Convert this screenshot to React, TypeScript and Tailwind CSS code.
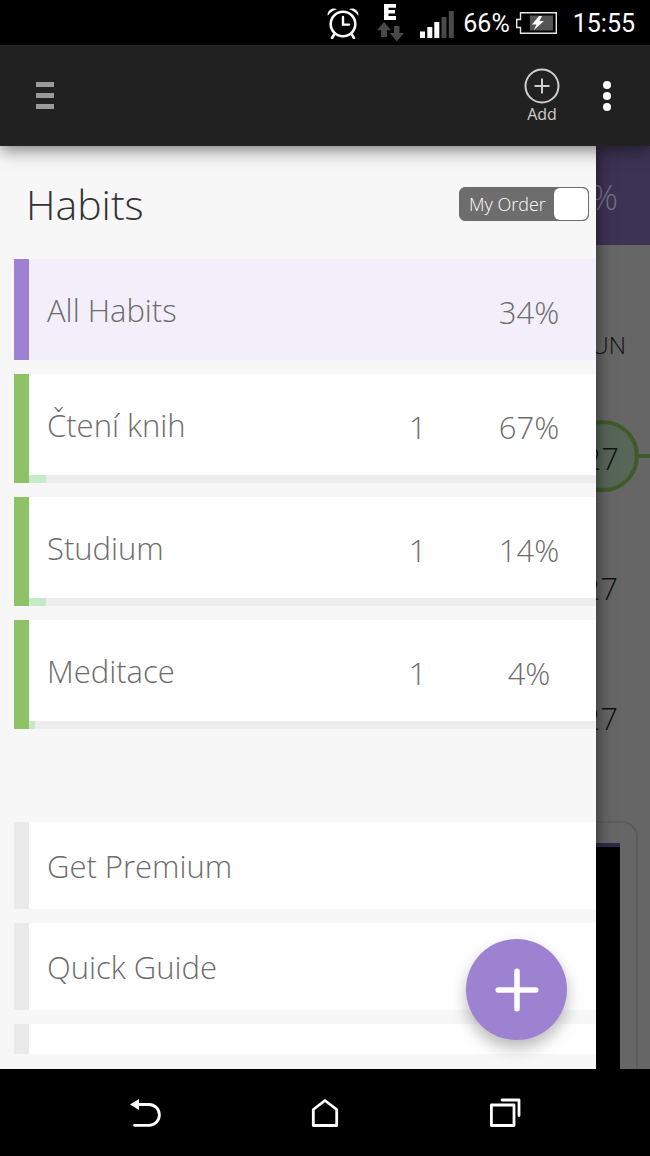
import React, { useState } from 'react';

// --- ICONS ---

const AlarmIcon = () => (
  <svg className="w-8 h-8" viewBox="0 0 32 32" fill="none" stroke="#fff" strokeLinecap="round">
    <circle cx="16" cy="17" r="12.3" strokeWidth="2.6" />
    <path d="M16 10v7.6h6" strokeWidth="2.4" />
    <path d="m7.500 27-2.500 4M24.500 27l2.500 4" strokeWidth="2.6" />
    <path d="M.8 8.800C-.6 4 5.500-.5 10 2.200 6 3.300 3 5.500.8 8.800ZM31.200 8.800C32.600 4 26.500-.5 22 2.200c4 1.100 7 3.300 9.200 6.600Z" fill="#fff" stroke="none" />
  </svg>
);

const DataIcon = () => (
  <svg className="w-[27px] h-[38px]" viewBox="0 0 27 38">
    <path d="M7 0h12v3.800h-7.500V6H18v3.500h-6.500v2.500H19v4H7Z" fill="#fff" />
    <path d="m7 18 7 8.300h-4V33H4v-6.700H0ZM17 22h5.500v7H27l-7.200 8.500-7-8.500H17Z" fill="#4b4b4b" />
  </svg>
);

const SignalIcon = () => (
  <svg className="w-[34px] h-[27px]" viewBox="0 0 34 27">
    <path d="M0 20.500h5V27H0ZM7.300 16h5v11h-5ZM14.300 11h5v16h-5Z" fill="#fff" />
    <path d="M21.500 6h5v21h-5ZM28.800 0h5v27h-5Z" fill="#4b4b4b" />
  </svg>
);

const BatteryIcon = () => (
  <svg className="w-[41px] h-[22px]" viewBox="0 0 41 22">
    <path d="M4.500.7h35.800v20.600H4.500V15.500H.7v-8h3.800Z" fill="none" stroke="#e8e8e8" strokeWidth="1.4" />
    <path d="M14 3.500h23v15H14Z" fill="#555" />
    <path d="m23 4-7 8.500h4.500L18 18l10-9h-4.500L26 4Z" fill="#fff" />
  </svg>
);

const BackIcon = () => (
  <svg className="w-8 h-8" viewBox="0 0 32 32">
    <path d="M8 7.500h12a10.300 10.300 0 0 1 0 20.800H5.500" fill="none" stroke="#fff" strokeWidth="2.8" strokeLinecap="round" />
    <path d="M1 7.500 10 2v11Z" fill="#fff" />
  </svg>
);

const HomeIcon = () => (
  <svg className="w-8 h-8" viewBox="0 0 32 32" fill="none" stroke="#fff" strokeWidth="2.8" strokeLinejoin="round">
    <path d="m16 3.500 11.700 9v16H4.300v-16Z" />
  </svg>
);

const RecentIcon = () => (
  <svg className="w-8 h-8" viewBox="0 0 32 32" fill="none" stroke="#fff" strokeWidth="2.8" strokeLinejoin="round" strokeLinecap="round">
    <path d="M2.400 8H25v20.500H2.400Z" />
    <path d="M13 3h17v15.500" />
  </svg>
);

// --- DATA ---

interface Habit {
  name: string;
  count?: number;
  percent: number;
  progress?: number;
}

const habits: Habit[] = [
  { name: 'All Habits', percent: 34 },
  { name: 'Čtení knih', count: 1, percent: 67, progress: 3 },
  { name: 'Studium', count: 1, percent: 14, progress: 3 },
  { name: 'Meditace', count: 1, percent: 4, progress: 1 },
];

const links = ['Get Premium', 'Quick Guide'];

// --- DRAWER ROWS ---

const HabitRow = ({ habit }: { habit: Habit }) => {
  const isAll = habit.progress === undefined;
  return (
    <button className="flex w-full text-left">
      <span className={`w-[15px] shrink-0 self-stretch ${isAll ? 'bg-[#9d82d2]' : 'bg-[#8fc267]'}`} />
      <span className={`flex-1 ${isAll ? 'bg-[#f2effa]' : 'bg-white'}`}>
        <span className="flex items-center h-[101px] pl-[18px] pt-px text-[31px] leading-10">
          <span className="flex-1">{habit.name}</span>
          <span className="w-[89px] pt-1 text-center">{habit.count}</span>
          <span className="w-[134px] pt-1 text-center">{habit.percent}%</span>
        </span>
        {!isAll && (
          <span className="block h-2 bg-[#ededed]">
            <span className="block h-full bg-[#c6ebc8]" style={{ width: `${habit.progress}%` }} />
          </span>
        )}
      </span>
    </button>
  );
};

// --- MAIN COMPONENT ---

const App: React.FC = () => {
  const [myOrder, setMyOrder] = useState(true);

  return (
    <div className="flex flex-col min-h-screen bg-black font-['Open_Sans','Noto_Sans',sans-serif] font-light">
      {/* Status bar */}
      <div className="flex items-center justify-end h-[45px] pr-[15px] text-white font-['Roboto',sans-serif] font-normal text-[25px]">
        <AlarmIcon />
        <div className="ml-[18px]"><DataIcon /></div>
        <div className="ml-4 pt-1"><SignalIcon /></div>
        <span className="ml-[9px] pt-[3px]">66%</span>
        <div className="ml-[6px]"><BatteryIcon /></div>
        <span className="ml-4 pt-[3px]">15:55</span>
      </div>

      {/* App bar */}
      <header className="relative z-20 flex items-center h-[101px] bg-[#212121] pl-9 pr-[39px] shadow-[0_4px_16px_rgba(0,0,0,0.5)]">
        <button aria-label="Menu" className="flex flex-col gap-[6px]">
          <span className="w-[18px] h-[5px] bg-[#9a9a9a]" />
          <span className="w-[18px] h-[5px] bg-[#9a9a9a]" />
          <span className="w-[18px] h-[5px] bg-[#9a9a9a]" />
        </button>
        <button className="ml-auto flex flex-col items-center text-[#cfcfcf] text-base leading-5 font-normal">
          <svg className="w-9 h-9" viewBox="0 0 36 36" fill="none" stroke="currentColor" strokeWidth="2">
            <circle cx="18" cy="18" r="16.500" />
            <path d="M18 10.500v15M10.500 18h15" />
          </svg>
          Add
        </button>
        <button aria-label="More options" className="ml-[43px] flex flex-col gap-[3px]">
          <span className="size-2 rounded-full bg-white" />
          <span className="size-2 rounded-full bg-white" />
          <span className="size-2 rounded-full bg-white" />
        </button>
      </header>

      <div className="flex flex-1">
        {/* Drawer */}
        <nav className="relative z-10 flex-1 bg-[#f7f7f7] pb-[15px] text-[#6c6c6c] shadow-[0_0_16px_rgba(0,0,0,0.6)]">
          <div className="flex items-center justify-between h-[113px] pl-[26px] pr-[7px] pt-[3px]">
            <h1 className="text-[41px] leading-[56px] text-[#333]">Habits</h1>
            <button
              role="switch"
              aria-checked={myOrder}
              onClick={() => setMyOrder(!myOrder)}
              className="flex items-center justify-between w-[130px] h-[34px] rounded-md border border-[#6d6d6d] bg-[#6d6d6d] pl-[9px] text-lg text-white font-light"
            >
              My Order
              <span className="w-[34px] h-8 rounded-md bg-white" />
            </button>
          </div>

          <div className="flex flex-col gap-[14px] pl-[14px]">
            {habits.map((habit) => (
              <HabitRow key={habit.name} habit={habit} />
            ))}
          </div>

          <div className="flex flex-col gap-[14px] pl-[14px] mt-[93px]">
            {links.map((label) => (
              <a key={label} href="#" className="flex items-center h-[87px] border-l-[15px] border-[#eaeaea] bg-white pl-[18px] pt-px text-[31px] leading-10">
                {label}
              </a>
            ))}
            <div className="h-[30px] border-l-[15px] border-[#eaeaea] bg-white" />
          </div>

          <button aria-label="Add habit" className="absolute right-[29px] bottom-[29px] flex items-center justify-center size-[101px] rounded-full bg-[#9d82d2] shadow-[0_8px_16px_rgba(0,0,0,0.28)]">
            <svg className="w-11 h-11" viewBox="0 0 44 44" stroke="#fff" strokeWidth="5.500" strokeLinecap="round">
              <path d="M22 3.200v37.600M3.200 22h37.600" />
            </svg>
          </button>
        </nav>

        {/* Dimmed page behind the drawer */}
        <main className="flex flex-col w-[54px] shrink-0 overflow-hidden bg-[#666] text-[#111]">
          <div className="flex items-center justify-end h-[99px] bg-[#3d3354] pr-8 pt-1 text-[34px] text-[#786f8c]">%</div>
          <div className="flex items-center justify-end h-[146px] pr-6 pt-[54px] text-2xl">SUN</div>
          <div className="flex items-center justify-end h-[130px]">
            <div className="flex items-center justify-end shrink-0 size-[72px] rounded-full border-4 border-[#405a2b] bg-[#586658] pr-4 pt-1 text-[31px]">27</div>
            <div className="w-[11px] h-1 shrink-0 bg-[#405a2b]" />
          </div>
          <div className="flex items-center justify-end h-[130px] pr-8 pt-1 text-[31px]">27</div>
          <div className="flex items-center justify-end h-[130px] pr-8 pt-1 text-[31px]">27</div>
          <div className="flex flex-1 mt-10 mr-3 rounded-tr-2xl border-t-2 border-r-2 border-[#5c5c5c] pt-5 pr-4">
            <div className="flex-1 border-t-4 border-[#32274a] bg-black" />
          </div>
        </main>
      </div>

      {/* Navigation keys */}
      <footer className="flex items-center justify-between h-[87px] px-[129px]">
        <button aria-label="Back"><BackIcon /></button>
        <button aria-label="Home"><HomeIcon /></button>
        <button aria-label="Recent apps"><RecentIcon /></button>
      </footer>
    </div>
  );
};

export default App;
